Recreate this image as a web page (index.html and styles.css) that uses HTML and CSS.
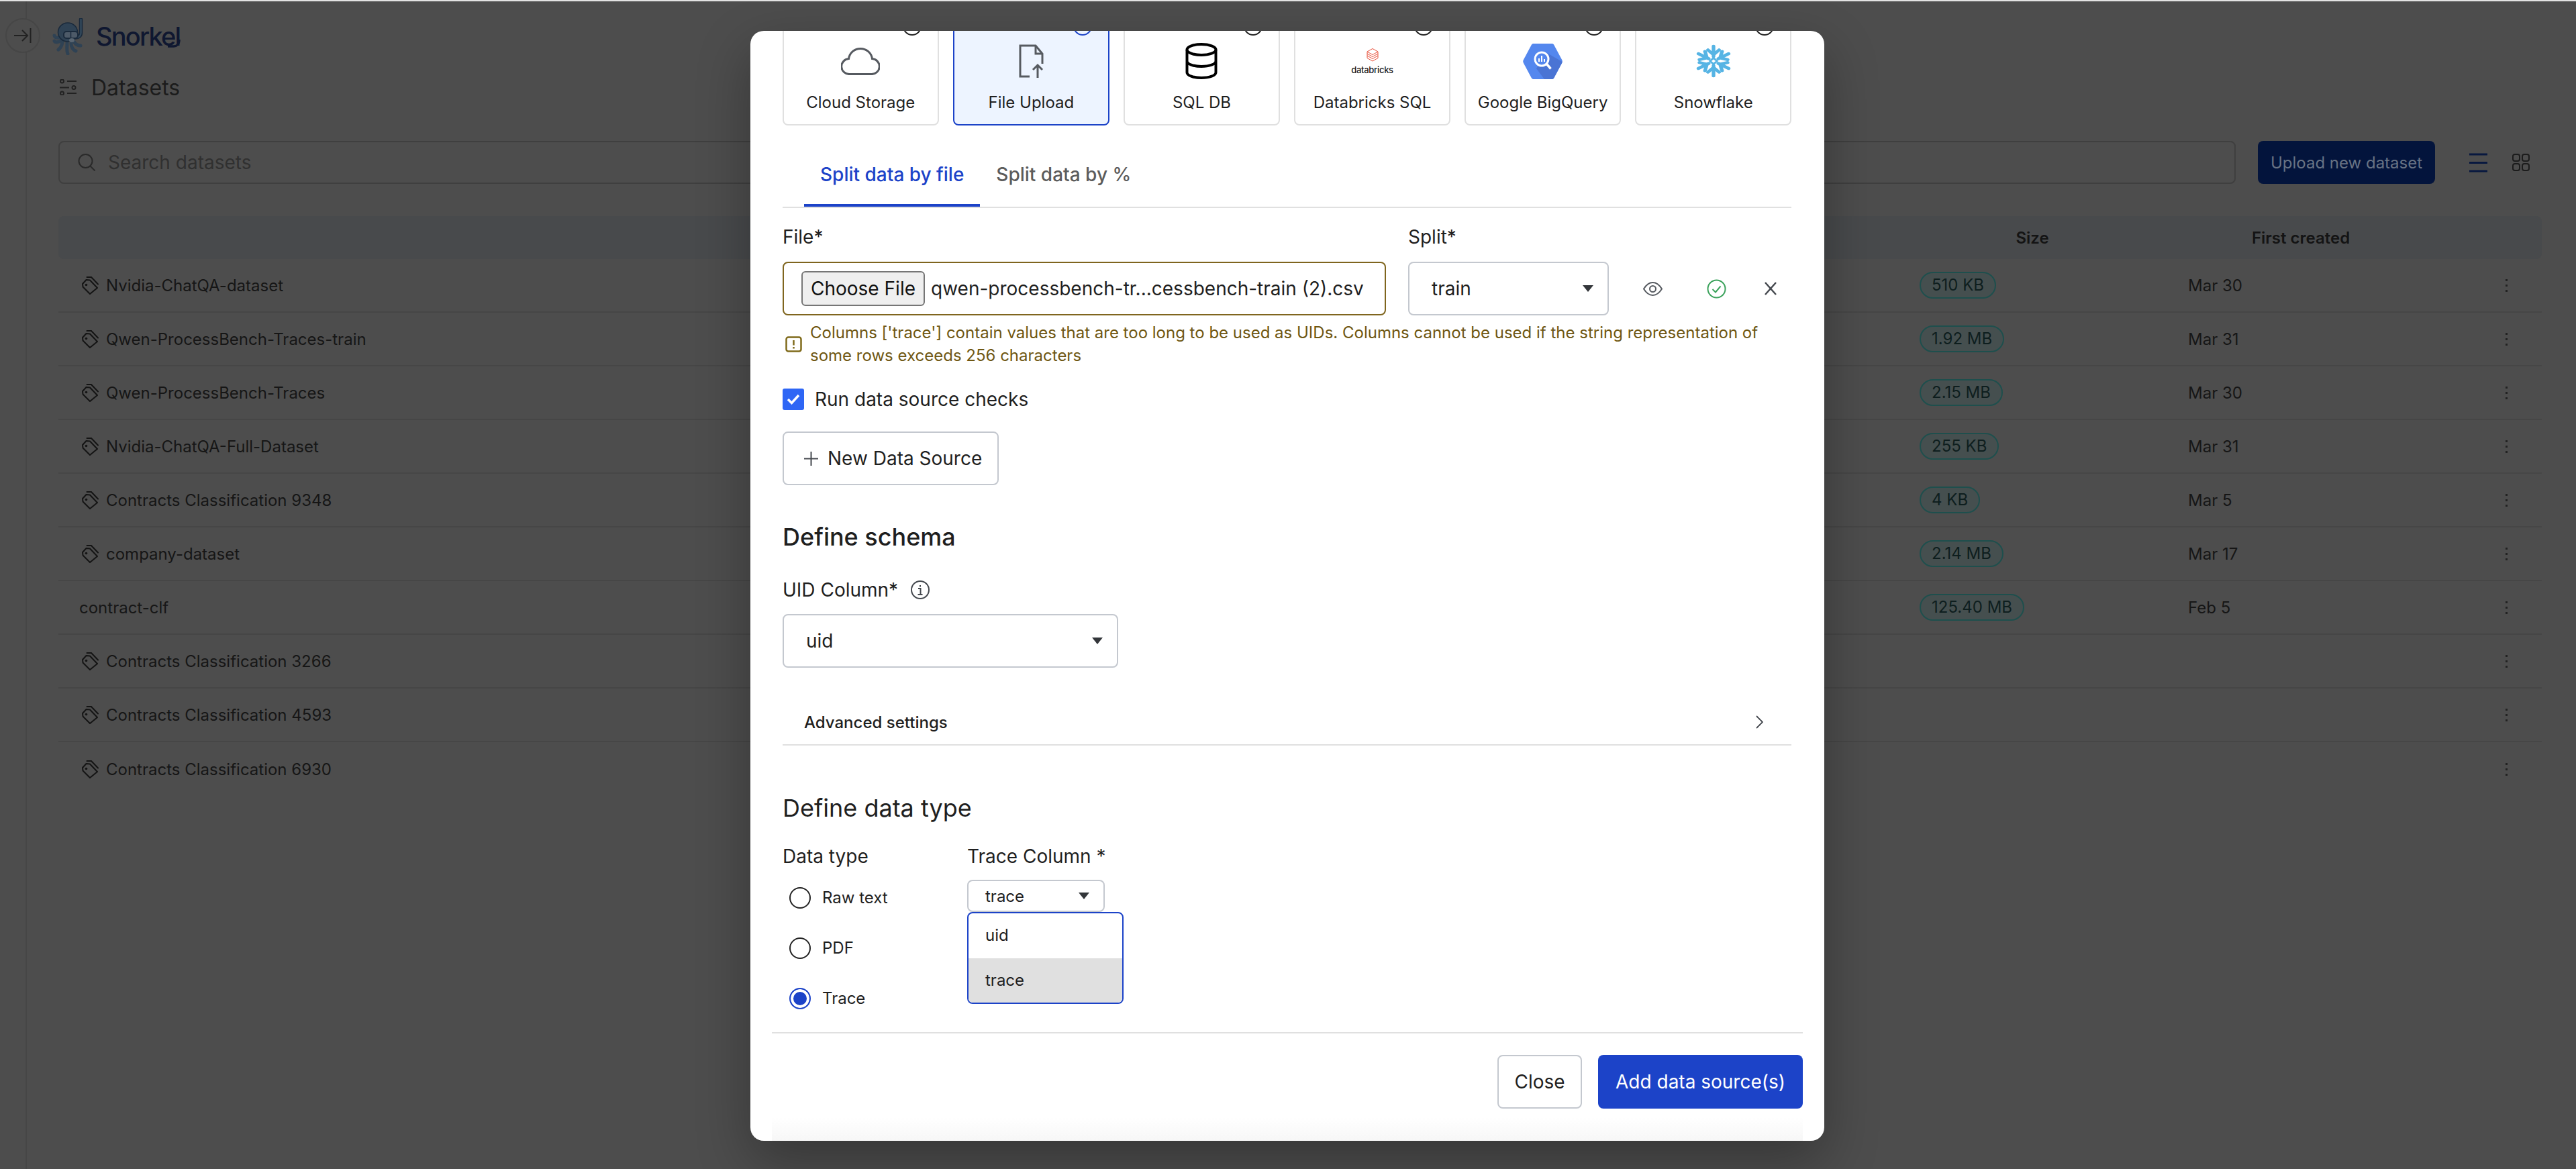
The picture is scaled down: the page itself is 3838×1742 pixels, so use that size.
FILE: index.html
```html
<!DOCTYPE html>
<html lang="en">
<head>
    <meta charset="UTF-8">
    <title>Snorkel - Datasets</title>
    <link rel="stylesheet" href="styles.css">
</head>
<body>
    <svg class="defs" width="0" height="0">
        <symbol id="tag" viewBox="0 0 26 27">
            <path d="M2 11l5.500-6 5.500.5 11 11.500-11 9L2.500 15.500z" fill="none" stroke="currentColor" stroke-width="2" stroke-linejoin="round"/>
            <path d="M8.500 1H15l10 10.500" fill="none" stroke="currentColor" stroke-width="2" stroke-linecap="round"/>
            <circle cx="7.500" cy="12.500" r="1.800" fill="currentColor"/>
        </symbol>
    </svg>

    <div class="app">
        <div class="sidebar"></div>
        <button class="collapse-btn">
            <svg width="26" height="22" viewBox="0 0 26 22"><path d="M0 11h20M12 3l8 8-8 8M24.500 0v22" fill="none" stroke="#222" stroke-width="2"/></svg>
        </button>
        <main class="main">
            <div class="logo">
                <svg class="logo-mark" width="46" height="55" viewBox="0 0 46 55" fill="none" stroke-linecap="round">
                    <path d="M42.500 2v20c0 4-3 7-8 7" stroke="#1a2a3c" stroke-width="5.500"/>
                    <path d="M42.500 2v20c0 4-3 7-8 7" stroke="#33485a" stroke-width="2.500"/>
                    <g stroke="#2f4254" stroke-width="5">
                        <path d="M12 28c-3 2-8 2-9-2"/>
                        <path d="M13 33c-3 3-9 4-10 1"/>
                        <path d="M15 36c-1 5-3 9-6 11"/>
                        <path d="M22 37c0 6-1 12 1 16"/>
                        <path d="M28 38c0 5 3 10 7 11"/>
                        <path d="M32 35c2 3 6 6 10 6"/>
                    </g>
                    <ellipse cx="23" cy="21" rx="14.500" ry="14" fill="#2f4254" stroke="#1a2a3c" stroke-width="1.500"/>
                    <rect x="17" y="20" width="21" height="10" rx="4" fill="#4d5a68" stroke="#1a2a3c" stroke-width="2"/>
                    <path d="M27.500 21v8" stroke="#1a2a3c" stroke-width="1.500"/>
                    <ellipse cx="29" cy="33" rx="4" ry="3" fill="#5a6672"/>
                </svg>
                <span class="logo-text">Snorkel<svg class="logo-hook" width="20" height="12" viewBox="0 0 20 12" fill="none" stroke="#0f1730" stroke-width="3.500"><path d="M18 0c0 7-4 10-8 10H1"/></svg></span>
            </div>
            <div class="page-title">
                <svg width="25" height="24" viewBox="0 0 25 24" fill="none" stroke="#222" stroke-width="2">
                    <circle cx="3.500" cy="3" r="2.500"/><path d="M11 3h14"/>
                    <path d="M0 12.500h14"/><circle cx="21" cy="12.500" r="2.500"/>
                    <circle cx="3.500" cy="21" r="2.500"/><path d="M11 21h14"/>
                </svg>
                <span>Datasets</span>
            </div>
            <div class="toolbar">
                <div class="search">
                    <svg width="27" height="26" viewBox="0 0 27 26" fill="none" stroke="#2a2a2a" stroke-width="2"><circle cx="11.500" cy="11" r="10"/><path d="M18.500 18.500l7 7"/></svg>
                    <span>Search datasets</span>
                </div>
                <button class="upload-btn">Upload new dataset</button>
                <div class="view-toggle">
                    <svg width="27" height="29" viewBox="0 0 27 29" stroke="#08183f" stroke-width="3"><path d="M0 2h27M0 14.500h27M0 27h27"/></svg>
                    <svg width="26" height="26" viewBox="0 0 26 26" fill="none" stroke="#1c1c1c" stroke-width="2"><rect x="1" y="1" width="10" height="10" rx="3"/><rect x="15" y="1" width="10" height="10" rx="3"/><rect x="1" y="15" width="10" height="10" rx="3"/><rect x="15" y="15" width="10" height="10" rx="3"/></svg>
                </div>
            </div>
            <div class="table">
                <div class="table-head">
                    <div></div>
                    <div>Size</div>
                    <div>First created</div>
                    <div></div>
                </div>
                <div class="table-row">
                    <div class="name"><svg class="tag"><use href="#tag"/></svg>Nvidia-ChatQA-dataset</div>
                    <div class="size"><span class="pill">510 KB</span></div>
                    <div class="date">Mar 30</div>
                    <div class="more"><i></i><i></i><i></i></div>
                </div>
                <div class="table-row">
                    <div class="name"><svg class="tag"><use href="#tag"/></svg>Qwen-ProcessBench-Traces-train</div>
                    <div class="size"><span class="pill">1.92 MB</span></div>
                    <div class="date">Mar 31</div>
                    <div class="more"><i></i><i></i><i></i></div>
                </div>
                <div class="table-row">
                    <div class="name"><svg class="tag"><use href="#tag"/></svg>Qwen-ProcessBench-Traces</div>
                    <div class="size"><span class="pill">2.15 MB</span></div>
                    <div class="date">Mar 30</div>
                    <div class="more"><i></i><i></i><i></i></div>
                </div>
                <div class="table-row">
                    <div class="name"><svg class="tag"><use href="#tag"/></svg>Nvidia-ChatQA-Full-Dataset</div>
                    <div class="size"><span class="pill">255 KB</span></div>
                    <div class="date">Mar 31</div>
                    <div class="more"><i></i><i></i><i></i></div>
                </div>
                <div class="table-row">
                    <div class="name"><svg class="tag"><use href="#tag"/></svg>Contracts Classification 9348</div>
                    <div class="size"><span class="pill">4 KB</span></div>
                    <div class="date">Mar 5</div>
                    <div class="more"><i></i><i></i><i></i></div>
                </div>
                <div class="table-row">
                    <div class="name"><svg class="tag"><use href="#tag"/></svg>company-dataset</div>
                    <div class="size"><span class="pill">2.14 MB</span></div>
                    <div class="date">Mar 17</div>
                    <div class="more"><i></i><i></i><i></i></div>
                </div>
                <div class="table-row">
                    <div class="name plain">contract-clf</div>
                    <div class="size"><span class="pill">125.40 MB</span></div>
                    <div class="date">Feb 5</div>
                    <div class="more"><i></i><i></i><i></i></div>
                </div>
                <div class="table-row">
                    <div class="name"><svg class="tag"><use href="#tag"/></svg>Contracts Classification 3266</div>
                    <div></div>
                    <div></div>
                    <div class="more"><i></i><i></i><i></i></div>
                </div>
                <div class="table-row">
                    <div class="name"><svg class="tag"><use href="#tag"/></svg>Contracts Classification 4593</div>
                    <div></div>
                    <div></div>
                    <div class="more"><i></i><i></i><i></i></div>
                </div>
                <div class="table-row">
                    <div class="name"><svg class="tag"><use href="#tag"/></svg>Contracts Classification 6930</div>
                    <div></div>
                    <div></div>
                    <div class="more"><i></i><i></i><i></i></div>
                </div>
            </div>
        </main>
    </div>

    <div class="modal">
        <div class="modal-body">
            <div class="source-cards">
                <div class="source-card">
                    <span class="card-radio"></span>
                    <div class="card-icon">
                        <svg width="58" height="41" viewBox="0 0 58 41"><path d="M13 39.500h32a11.500 11.500 0 0 0 1.500-23A17.500 17.500 0 0 0 29 1.500 17.500 17.500 0 0 0 11.500 16.500 11.500 11.500 0 0 0 13 39.500z" fill="none" stroke="#565a60" stroke-width="3"/></svg>
                    </div>
                    <div class="card-label">Cloud Storage</div>
                </div>
                <div class="source-card selected">
                    <span class="card-radio"></span>
                    <div class="card-icon">
                        <svg width="37" height="50" viewBox="0 0 37 50" fill="none" stroke="#565a60" stroke-width="3"><path d="M35 29V14L25 2H2v46h14"/><path d="M25 2v12h10"/><path d="M28 50V31M21 38l7-7 7 7"/></svg>
                    </div>
                    <div class="card-label">File Upload</div>
                </div>
                <div class="source-card">
                    <span class="card-radio"></span>
                    <div class="card-icon">
                        <svg width="48" height="54" viewBox="0 0 48 54" fill="none" stroke="#000" stroke-width="4"><ellipse cx="24" cy="10" rx="21.500" ry="8"/><path d="M2.500 10v34c0 4.500 9.500 8 21.500 8s21.500-3.500 21.500-8V10M2.500 27c0 4.500 9.500 8 21.500 8s21.500-3.500 21.500-8"/></svg>
                    </div>
                    <div class="card-label">SQL DB</div>
                </div>
                <div class="source-card">
                    <span class="card-radio"></span>
                    <div class="card-icon databricks">
                        <svg width="18" height="20" viewBox="0 0 18 20" fill="none" stroke="#e8503a" stroke-width="1"><path d="M9 .5l8 4.500-8 4.500-8-4.500zM1 8l8 4.500L17 8M1 11l8 4.500 8-4.500M1 14.500l8 4.500 8-4.500M1 5v9.500M17 5v9.500"/></svg>
                        <span>databricks</span>
                    </div>
                    <div class="card-label">Databricks SQL</div>
                </div>
                <div class="source-card">
                    <span class="card-radio"></span>
                    <div class="card-icon">
                        <svg width="59" height="53" viewBox="0 0 59 53">
                            <path d="M16 0h27c1.500 0 2.500.6 3.200 1.800l12 22.500c.7 1.500.7 3 0 4.400l-12 22.500c-.7 1.200-1.700 1.800-3.200 1.800H16c-1.500 0-2.500-.6-3.200-1.800L.8 28.700c-.7-1.400-.7-2.900 0-4.400l12-22.500C13.500.6 14.500 0 16 0z" fill="#5487ee"/>
                            <path d="M36 14l22.500 13-.300 1.700-12 22.500c-.7 1.200-1.700 1.800-3.200 1.800H32L20 37z" fill="#4a74d4"/>
                            <circle cx="28" cy="23" r="10" fill="#5487ee" stroke="#fff" stroke-width="3"/>
                            <path d="M35.500 30.500l6 7" stroke="#fff" stroke-width="3.500"/>
                            <path d="M24 22v5M28 18v9M32 23v4" stroke="#fff" stroke-width="2"/>
                        </svg>
                    </div>
                    <div class="card-label">Google BigQuery</div>
                </div>
                <div class="source-card">
                    <span class="card-radio"></span>
                    <div class="card-icon">
                        <svg width="52" height="50" viewBox="4 0 44 50" preserveAspectRatio="none" fill="none" stroke="#56b4e4" stroke-width="4.500" stroke-linecap="round" stroke-linejoin="round">
                            <g id="flake-arm"><path d="M26 3v15M19 8.500l7 7 7-7"/></g>
                            <use href="#flake-arm" transform="rotate(60 26 25)"/>
                            <use href="#flake-arm" transform="rotate(120 26 25)"/>
                            <use href="#flake-arm" transform="rotate(180 26 25)"/>
                            <use href="#flake-arm" transform="rotate(240 26 25)"/>
                            <use href="#flake-arm" transform="rotate(300 26 25)"/>
                            <path d="M26 20.500l4.500 4.500-4.500 4.500-4.500-4.500z" stroke-width="2.500"/>
                        </svg>
                    </div>
                    <div class="card-label">Snowflake</div>
                </div>
            </div>

            <div class="tabs">
                <div class="tab active">Split data by file</div>
                <div class="tab">Split data by %</div>
            </div>

            <div class="file-row">
                <div class="file-col">
                    <label class="field-label">File*</label>
                    <div class="file-input">
                        <button class="choose-btn">Choose File</button>
                        <span>qwen-processbench-tr...cessbench-train (2).csv</span>
                    </div>
                </div>
                <div class="split-col">
                    <label class="field-label">Split*</label>
                    <div class="select split-select">train<span class="caret"></span></div>
                </div>
                <div class="file-actions">
                    <svg width="29" height="21" viewBox="0 0 29 21" fill="none" stroke="#565a60" stroke-width="2"><path d="M1 10.500C5 4 9 1 14.500 1S24 4 28 10.500C24 17 20 20 14.500 20S5 17 1 10.500z"/><circle cx="14.500" cy="10.500" r="4.500"/></svg>
                    <svg width="29" height="29" viewBox="0 0 29 29" fill="none" stroke="#3da35d" stroke-width="2"><circle cx="14.500" cy="14.500" r="13"/><path d="M8.500 15l4.500 4.500 7.500-9"/></svg>
                    <svg width="20" height="20" viewBox="0 0 20 20" stroke="#45494f" stroke-width="2.500"><path d="M2 1l16 18M18 1L2 19"/></svg>
                </div>
            </div>

            <div class="warning">
                <svg width="25" height="24" viewBox="0 0 25 24" fill="none" stroke="#7f6a1a" stroke-width="2.500"><rect x="1.500" y="1.500" width="22" height="21" rx="3"/><path d="M12.500 6v7.500M12.500 16v2.500"/></svg>
                <p>Columns ['trace'] contain values that are too long to be used as UIDs. Columns cannot be used if the string representation of some rows exceeds 256 characters</p>
            </div>

            <div class="check-row">
                <span class="checkbox">
                    <svg width="20" height="16" viewBox="0 0 20 16" fill="none" stroke="#fff" stroke-width="3.500"><path d="M2 8l5.500 5.500L18 2"/></svg>
                </span>
                Run data source checks
            </div>

            <button class="new-source-btn">
                <svg width="21" height="21" viewBox="0 0 21 21" stroke="#45494f" stroke-width="2"><path d="M10.500 0v21M0 10.500h21"/></svg>
                New Data Source
            </button>

            <h3 class="schema-title">Define schema</h3>
            <div class="uid-label">
                UID Column*
                <svg width="28" height="28" viewBox="0 0 28 28" fill="none" stroke="#45494f" stroke-width="2"><circle cx="14" cy="14" r="13"/><path d="M11 12h3.500v9M10.500 21h7M14 7v2.500"/></svg>
            </div>
            <div class="select uid-select">uid<span class="caret"></span></div>

            <div class="advanced">
                <span>Advanced settings</span>
                <svg width="11" height="20" viewBox="0 0 11 20" fill="none" stroke="#45494f" stroke-width="1.800"><path d="M1 1l9 9-9 9"/></svg>
            </div>

            <h3 class="type-title">Define data type</h3>
            <div class="type-grid">
                <div class="type-col">
                    <div class="field-label">Data type</div>
                    <div class="radio-list">
                        <div class="radio-row"><span class="radio"></span>Raw text</div>
                        <div class="radio-row"><span class="radio"></span>PDF</div>
                        <div class="radio-row"><span class="radio on"></span>Trace</div>
                    </div>
                </div>
                <div class="trace-col">
                    <div class="field-label">Trace Column *</div>
                    <div class="trace-select-wrap">
                        <div class="select trace-select">trace<span class="caret"></span></div>
                        <div class="dropdown">
                            <div class="option">uid</div>
                            <div class="option hover">trace</div>
                        </div>
                    </div>
                </div>
            </div>
        </div>
        <div class="modal-footer">
            <button class="close-btn">Close</button>
            <button class="add-btn">Add data source(s)</button>
        </div>
    </div>
</body>
</html>
```

FILE: styles.css
```css
* {
    box-sizing: border-box;
}

html, body {
    margin: 0;
    height: 100%;
}

body {
    position: relative;
    overflow: hidden;
    font-family: Inter, "Noto Sans", sans-serif;
    color: #1f1f1f;
    background-color: #4d4d4d;
    border-top: 2px solid #e3e3e3;
}

button {
    font-family: inherit;
}

.defs {
    position: absolute;
}

/* page behind the modal, colours are already dimmed */
.app {
    display: flex;
    height: 100%;
}

.sidebar {
    width: 40px;
    flex-shrink: 0;
    border-right: 2px solid #464646;
}

.collapse-btn {
    position: absolute;
    left: 8px;
    top: 25px;
    width: 52px;
    height: 52px;
    display: flex;
    align-items: center;
    justify-content: center;
    padding: 0;
    border: 2px solid #464646;
    border-radius: 50%;
    background-color: #4d4d4d;
}

.main {
    flex: 1;
    min-width: 0;
    padding: 25px 51px 0 47px;
}

.logo {
    display: flex;
    align-items: center;
    height: 54px;
    margin-left: -9px;
}

.logo-text {
    position: relative;
    margin-left: 19px;
    font-size: 38px;
    font-weight: 500;
    letter-spacing: -1.800px;
    color: #0f1730;
}

.logo-hook {
    position: absolute;
    right: -1px;
    bottom: 6px;
}

.page-title {
    display: flex;
    align-items: center;
    gap: 22px;
    height: 24px;
    margin: 37px 0 0 2px;
    font-size: 32px;
    color: #1c1c1c;
}

.toolbar {
    display: flex;
    align-items: center;
    margin-top: 68px;
}

.search {
    flex: 1;
    height: 64px;
    display: flex;
    align-items: center;
    gap: 18px;
    padding-left: 27px;
    border: 2px solid #3f3f3f;
    border-radius: 8px;
    font-size: 28px;
    color: #303030;
}

.upload-btn {
    width: 264px;
    height: 64px;
    margin-left: 33px;
    border: none;
    border-radius: 8px;
    background-color: #03143c;
    color: #687384;
    font-size: 24px;
}

.view-toggle {
    display: flex;
    align-items: center;
    gap: 37px;
    margin-left: 51px;
    margin-right: 18px;
}

.table {
    margin-top: 48px;
}

.table-head, .table-row {
    display: grid;
    grid-template-columns: 1fr 400px 400px 159px;
    align-items: center;
    font-size: 24px;
}

.table-head {
    height: 64px;
    border-radius: 8px;
    background-color: #484a4c;
    color: #141414;
    font-weight: 600;
    text-align: center;
}

.table-row {
    height: 80px;
    border-bottom: 2px solid #464646;
    color: #161616;
}

.table-row:last-child {
    border-bottom: none;
}

.name {
    display: flex;
    align-items: center;
    gap: 11px;
    padding-left: 34px;
}

.name.plain {
    padding-left: 31px;
}

.tag {
    width: 26px;
    height: 27px;
    color: #141414;
}

.size {
    padding-left: 32px;
}

.pill {
    display: inline-block;
    height: 40px;
    padding: 0 16px;
    line-height: 36px;
    border: 2px solid #1e4f4d;
    border-radius: 20px;
    background-color: #454f4f;
    color: #0e1e1e;
}

.date {
    padding-left: 32px;
}

.more {
    display: flex;
    flex-direction: column;
    gap: 5px;
    padding-left: 105px;
}

.more i {
    width: 3px;
    height: 3px;
    background-color: #222;
}

/* modal */
.modal {
    position: absolute;
    left: 1118px;
    top: 44px;
    width: 1600px;
    height: 1654px;
    display: flex;
    flex-direction: column;
    overflow: hidden;
    border-radius: 20px;
    background-color: #fff;
    box-shadow: 0 30px 80px rgba(0, 0, 0, 0.3);
}

.modal-body {
    flex: 1;
    min-height: 0;
    overflow: hidden;
    padding: 0 49px 0 48px;
}

.source-cards {
    display: grid;
    grid-template-columns: repeat(6, 1fr);
    gap: 21.600px;
    margin-top: -35px;
}

.source-card {
    position: relative;
    height: 176px;
    border: 2px solid #e0e0e0;
    border-radius: 8px;
    background-color: #fff;
}

.source-card.selected {
    border-color: #1c43c8;
    background-color: #edf4ff;
}

.card-radio {
    position: absolute;
    right: 24px;
    top: 12px;
    width: 28px;
    height: 28px;
    border: 2px solid #222;
    border-radius: 50%;
}

.selected .card-radio {
    border-color: #1c43c8;
}

.selected .card-radio::after {
    content: "";
    display: block;
    width: 12px;
    height: 12px;
    margin: 6px;
    border-radius: 50%;
    background-color: #1c43c8;
}

.card-icon {
    display: flex;
    flex-direction: column;
    align-items: center;
    justify-content: center;
    height: 56px;
    margin-top: 50px;
}

.databricks span {
    margin-top: 5px;
    font-size: 13px;
    font-weight: 500;
    line-height: 14px;
    color: #1b1b1b;
    letter-spacing: -0.3px;
}

.card-label {
    margin-top: 16px;
    font-size: 24px;
    line-height: 36px;
    text-align: center;
}

.tabs {
    display: flex;
    margin-top: 25px;
    padding-left: 32px;
    border-bottom: 2px solid #e0e0e0;
}

.tab {
    height: 96px;
    padding: 0 24px;
    line-height: 96px;
    font-size: 28px;
    font-weight: 500;
    color: #5c5c5c;
}

.tab.active {
    border-bottom: 4px solid #1c43c8;
    color: #1c43c8;
}

.field-label {
    display: block;
    font-size: 28px;
    line-height: 40px;
}

.file-row {
    display: flex;
    align-items: flex-end;
    margin-top: 23px;
}

.file-col {
    width: 899px;
}

.file-input {
    display: flex;
    align-items: center;
    gap: 9px;
    height: 80px;
    margin-top: 17px;
    padding-left: 26px;
    border: 2px solid #7f651e;
    border-radius: 8px;
    font-size: 28px;
    white-space: nowrap;
}

.choose-btn {
    width: 184px;
    height: 52px;
    padding: 0;
    border: 2px solid #767676;
    border-radius: 6px;
    background-color: #efefef;
    color: #111;
    font-size: 28px;
}

.split-col {
    width: 299px;
    margin-left: 33px;
}

.select {
    position: relative;
    display: flex;
    align-items: center;
    border: 2px solid #c4c8cf;
    border-radius: 8px;
    background-color: #fff;
    font-size: 28px;
}

.split-select {
    height: 80px;
    margin-top: 17px;
    padding-left: 33px;
}

.caret {
    position: absolute;
    right: 21px;
    top: 50%;
    margin-top: -5px;
    width: 0;
    height: 0;
    border-left: 8px solid transparent;
    border-right: 8px solid transparent;
    border-top: 10px solid #33363a;
}

.file-actions {
    display: flex;
    align-items: center;
    height: 80px;
    margin-left: 51px;
}

.file-actions svg:nth-child(2) {
    margin-left: 66px;
}

.file-actions svg:nth-child(3) {
    margin-left: 56px;
}

.warning {
    display: flex;
    align-items: center;
    gap: 12px;
    margin-top: 9px;
    padding-left: 4px;
    color: #6f5712;
}

.warning svg {
    flex-shrink: 0;
}

.warning p {
    margin: 0;
    font-size: 24px;
    line-height: 34px;
}

.check-row {
    display: flex;
    align-items: center;
    gap: 16px;
    height: 32px;
    margin-top: 32px;
    font-size: 28px;
}

.checkbox {
    display: flex;
    align-items: center;
    justify-content: center;
    width: 32px;
    height: 32px;
    border-radius: 3px;
    background-color: #2e66f5;
}

.new-source-btn {
    display: flex;
    align-items: center;
    gap: 14px;
    height: 80px;
    margin-top: 32px;
    padding: 0 23px 0 30px;
    border: 2px solid #c4c8cf;
    border-radius: 8px;
    background-color: #fff;
    color: #1f1f1f;
    font-size: 28px;
}

.schema-title, .type-title {
    margin: 0;
    font-size: 36px;
    line-height: 44px;
}

.schema-title {
    margin-top: 55px;
    font-weight: 500;
}

.type-title {
    margin-top: 71px;
    font-weight: 400;
}

.uid-label {
    display: flex;
    align-items: center;
    gap: 19px;
    margin-top: 37px;
    font-size: 28px;
    line-height: 40px;
}

.uid-select {
    width: 500px;
    height: 80px;
    margin-top: 16px;
    padding-left: 33px;
}

.advanced {
    display: flex;
    align-items: center;
    justify-content: space-between;
    height: 68px;
    margin-top: 48px;
    padding: 0 42px 0 32px;
    border-bottom: 2px solid #e0e0e0;
    font-size: 24px;
    font-weight: 500;
}

.type-grid {
    display: flex;
    margin-top: 30px;
}

.type-col {
    width: 275px;
    flex-shrink: 0;
}

.radio-list {
    margin-top: 4px;
}

.radio-row {
    display: flex;
    align-items: center;
    gap: 17px;
    height: 75px;
    padding-left: 10px;
    font-size: 24px;
}

.radio {
    width: 32px;
    height: 32px;
    border: 2px solid #222;
    border-radius: 50%;
}

.radio.on {
    border-color: #1c43c8;
    background-color: #1c43c8;
    box-shadow: inset 0 0 0 4px #fff;
}

.trace-select-wrap {
    position: relative;
    width: 205px;
    margin-top: 15px;
}

.trace-select {
    height: 48px;
    padding-left: 25px;
    font-size: 24px;
}

.dropdown {
    position: absolute;
    left: 0;
    top: 100%;
    width: 233px;
    height: 137px;
    overflow: hidden;
    border: 2px solid #1c43c8;
    border-radius: 8px;
    background-color: #fff;
    font-size: 24px;
}

.option {
    height: 66.500px;
    padding-left: 25px;
    line-height: 66px;
}

.option.hover {
    background-color: #e0e0e0;
}

.modal-footer {
    display: flex;
    justify-content: flex-end;
    gap: 24px;
    height: 162px;
    margin: 0 32px;
    padding-top: 32px;
    border-top: 2px solid #e0e0e0;
    background: linear-gradient(to bottom, #fff 125px, #f7f7f7);
}

.close-btn, .add-btn {
    height: 80px;
    border-radius: 8px;
    font-size: 28px;
}

.close-btn {
    width: 126px;
    border: 2px solid #c4c8cf;
    background-color: #fff;
    color: #1f1f1f;
}

.add-btn {
    width: 305px;
    border: none;
    background-color: #1c43c8;
    color: #fff;
}
```
